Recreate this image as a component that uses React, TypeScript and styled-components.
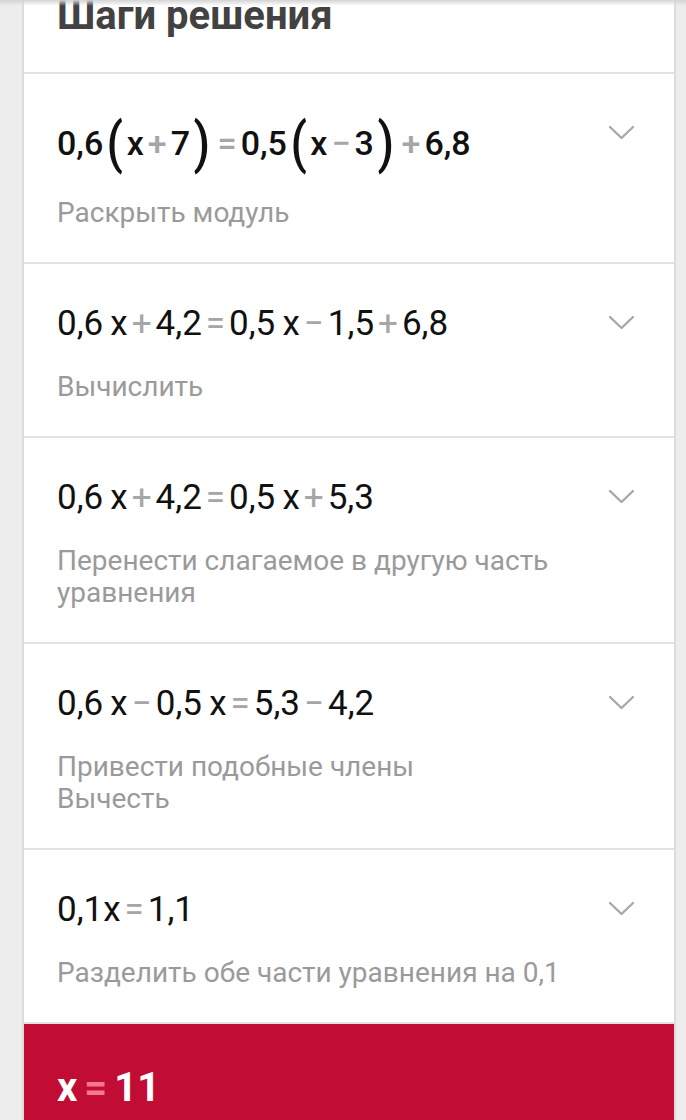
import React from "react";
import styled, { createGlobalStyle } from "styled-components";

const Global = createGlobalStyle`
  html, body { margin: 0; padding: 0; background: #ededed; }
  body { font-family: Roboto, "Noto Sans", Arial, sans-serif; }
  * { box-sizing: border-box; }
`;

const Page = styled.div`
  width: 686px;
  height: 1120px;
  overflow: hidden;
  padding: 0 10px 0 22px;
  background: #ededed;
  position: relative;
  &::before {
    content: "";
    position: absolute;
    left: 0; right: 0; top: 0;
    height: 6px;
    background: linear-gradient(#d4d4d4, rgba(237,237,237,0));
    z-index: 2;
  }
`;

const Card = styled.div`
  background: #fff;
  border-left: 2px solid #dcdcdc;
  border-right: 2px solid #dcdcdc;
  min-height: 1120px;
`;

const Header = styled.div`
  display: flex;
  align-items: flex-start;
  height: 74px;
  padding: 0 0 0 33px;
  border-bottom: 2px solid #e2e2e2;
`;

const Title = styled.h2`
  margin: -4px 0 0;
  font-size: 40px;
  line-height: 40px;
  font-weight: 700;
  color: #424242;
`;

const Step = styled.div`
  display: grid;
  grid-template-columns: 1fr 27px;
  column-gap: 20px;
  padding: 39px 39px 33px 33px;
  border-bottom: 2px solid #e2e2e2;
`;

const Body = styled.div`
  display: flex;
  flex-direction: column;
`;

const Equation = styled.div<{ $big?: boolean }>`
  height: ${(p) => (p.$big ? 60 : 40)}px;
  margin-bottom: ${(p) => (p.$big ? 24 : 28)}px;
  display: flex;
  align-items: center;
  font-size: ${(p) => (p.$big ? 34 : 35)}px;
  font-weight: ${(p) => (p.$big ? 500 : 400)};
  color: #111;
  white-space: pre;
`;

const Num = styled.span``;

const Op = styled.span`
  color: #a6a6a6;
  padding: 0 4px;
`;

const Paren = styled.span`
  font-size: 56px;
  font-weight: 500;
  line-height: 1;
  transform: scaleX(0.85);
  display: inline-block;
  margin: 0 2px;
`;

const Desc = styled.div`
  font-size: 28px;
  line-height: 32px;
  color: #9a9a9a;
`;

const Chevron = styled.svg`
  width: 27px;
  height: 16px;
  margin-top: 12px;
`;

const Result = styled.div`
  background: #c10c33;
  height: 120px;
  padding: 44px 0 0 33px;
  font-size: 40px;
  font-weight: 700;
  color: #fff;
  line-height: 40px;
`;

const ResOp = styled.span`
  color: #f57891;
  padding: 0 7px;
`;

type Tok = { t: string; k: "n" | "o" | "p" };

const parse = (s: string): Tok[] =>
  s.split("|").map((x) => {
    if (x === "(" || x === ")") return { t: x, k: "p" };
    if (["+", "=", "−"].includes(x)) return { t: x, k: "o" };
    return { t: x, k: "n" };
  });

const steps = [
  { eq: "0,6|(|x|+|7|)|=|0,5|(|x|−|3|)|+|6,8", desc: ["Раскрыть модуль"], big: true },
  { eq: "0,6\u2009x|+|4,2|=|0,5\u2009x|−|1,5|+|6,8", desc: ["Вычислить"] },
  { eq: "0,6\u2009x|+|4,2|=|0,5\u2009x|+|5,3", desc: ["Перенести слагаемое в другую часть", "уравнения"] },
  { eq: "0,6\u2009x|−|0,5\u2009x|=|5,3|−|4,2", desc: ["Привести подобные члены", "Вычесть"] },
  { eq: "0,1x|=|1,1", desc: ["Разделить обе части уравнения на 0,1"] },
];

const ChevronIcon = () => (
  <Chevron viewBox="0 0 27 16" fill="none">
    <path d="M2 2 L13.5 13 L25 2" stroke="#a8a8a8" strokeWidth="2.4" strokeLinecap="round" strokeLinejoin="round" />
  </Chevron>
);

export default function App() {
  return (
    <Page>
      <Global />
      <Card>
        <Header>
          <Title>Шаги решения</Title>
        </Header>
        {steps.map((s, i) => (
          <Step key={i}>
            <Body>
              <Equation $big={s.big}>
                {parse(s.eq).map((tok, j) =>
                  tok.k === "o" ? (
                    <Op key={j}>{tok.t}</Op>
                  ) : tok.k === "p" ? (
                    <Paren key={j}>{tok.t}</Paren>
                  ) : (
                    <Num key={j}>{tok.t}</Num>
                  )
                )}
              </Equation>
              {s.desc.map((d, j) => (
                <Desc key={j}>{d}</Desc>
              ))}
            </Body>
            <ChevronIcon />
          </Step>
        ))}
        <Result>
          x<ResOp>=</ResOp>11
        </Result>
      </Card>
    </Page>
  );
}
